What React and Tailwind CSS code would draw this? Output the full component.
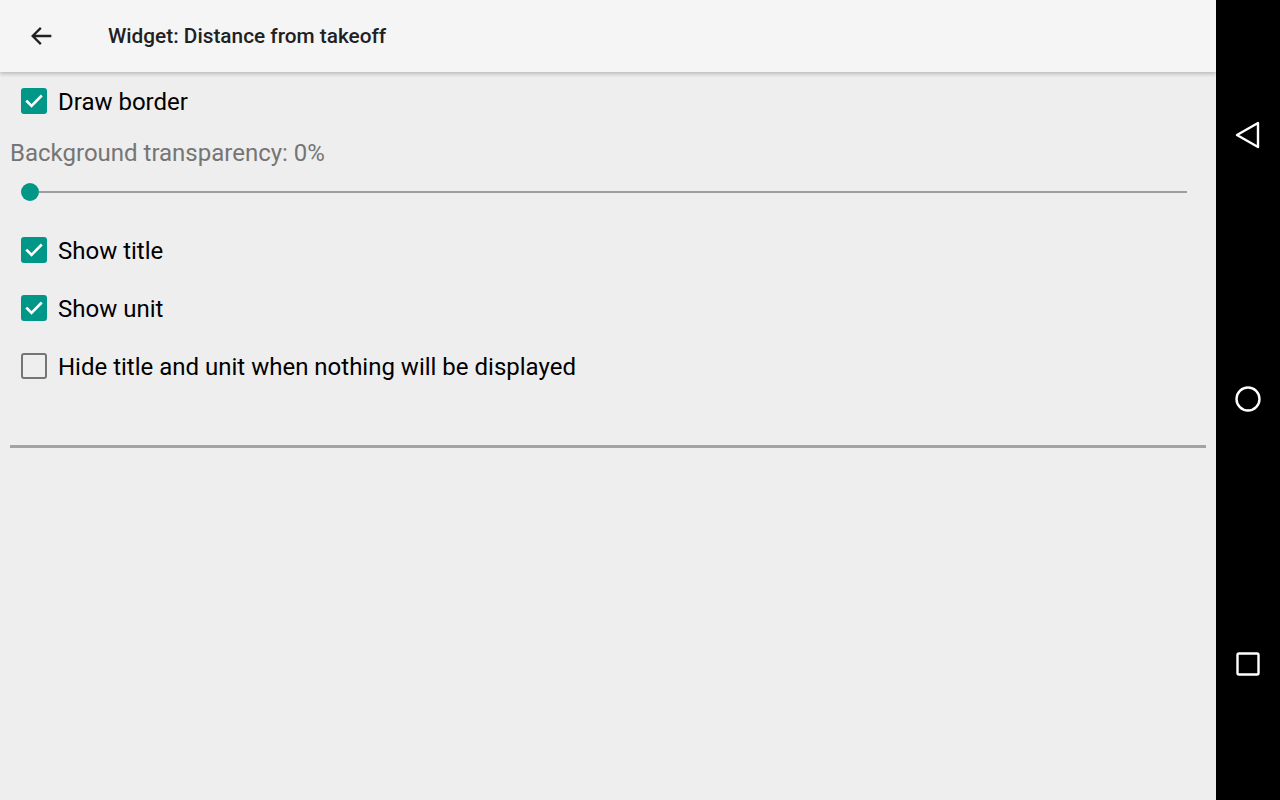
import React from 'react';

// Android-style widget settings screen: toolbar, checkbox prefs, a slider,
// and the system nav bar on the right edge.

function CheckBox({ checked }) {
  if (!checked) {
    return <span className="w-[26px] h-[26px] rounded-[3px] border-[2.5px] border-[#757575] shrink-0" />;
  }
  return (
    <span className="w-[26px] h-[26px] rounded-[3px] bg-[#009688] flex items-center justify-center shrink-0">
      <svg width="22" height="22" viewBox="0 0 24 24" fill="none">
        <path d="M4.5 12.5l4.8 4.8L19.5 7" stroke="#ffffff" strokeWidth="2.8" strokeLinecap="square" />
      </svg>
    </span>
  );
}

function Pref({ label, checked }) {
  return (
    <div className="h-[58px] flex items-center pl-[21px] gap-[11px]">
      <CheckBox checked={checked} />
      <span className="text-[24px] text-black leading-none pt-[2px]">{label}</span>
    </div>
  );
}

export default function App() {
  return (
    <div className="w-[1280px] h-[800px] flex bg-[#eeeeee] overflow-hidden" style={{ fontFamily: 'Roboto, "Liberation Sans", sans-serif' }}>
      <div className="flex-1 flex flex-col">
        <div className="h-[72px] bg-[#f5f5f5] flex items-center shadow-[0_2px_4px_rgba(0,0,0,0.22)] relative z-10 shrink-0">
          <div className="w-[84px] flex items-center justify-center">
            <svg width="28" height="28" viewBox="0 0 24 24" fill="none">
              <path d="M20 12H4.5M11 5l-7 7 7 7" stroke="#212121" strokeWidth="2" />
            </svg>
          </div>
          <span className="ml-[24px] pt-[2px] text-[20.8px] font-medium text-[#212121]">Widget: Distance from takeoff</span>
        </div>

        <div className="flex flex-col">
          <Pref label="Draw border" checked />
          <div className="h-[44px] flex items-center pl-[10px] pt-[2px] text-[24px] text-[#757575]">Background transparency: 0%</div>
          <div className="h-[36px] flex items-center pl-[21px] pr-[29px]">
            <span className="w-[18px] h-[18px] rounded-full bg-[#009688] shrink-0" />
            <span className="flex-1 h-[2px] bg-[#9e9e9e]" />
          </div>
          <div className="h-[11px]" />
          <Pref label="Show title" checked />
          <Pref label="Show unit" checked />
          <Pref label="Hide title and unit when nothing will be displayed" checked={false} />
          <div className="mt-[50px] mx-[10px] h-[3px] bg-[#a3a3a3]" />
        </div>
      </div>

      <div className="w-[64px] bg-black flex flex-col items-center">
        <div className="h-[270px] flex items-center justify-center">
          <svg width="28" height="30" viewBox="0 0 28 30" fill="none">
            <path d="M3 15L24 3v24z" stroke="#ffffff" strokeWidth="2.4" strokeLinejoin="round" />
          </svg>
        </div>
        <div className="h-[258px] flex items-center justify-center">
          <svg width="28" height="28" viewBox="0 0 28 28" fill="none">
            <circle cx="14" cy="14" r="11.5" stroke="#ffffff" strokeWidth="2.4" />
          </svg>
        </div>
        <div className="h-[272px] flex items-center justify-center">
          <svg width="26" height="26" viewBox="0 0 26 26" fill="none">
            <rect x="2.5" y="2.5" width="21" height="21" rx="1.5" stroke="#ffffff" strokeWidth="2.4" />
          </svg>
        </div>
      </div>
    </div>
  );
}
